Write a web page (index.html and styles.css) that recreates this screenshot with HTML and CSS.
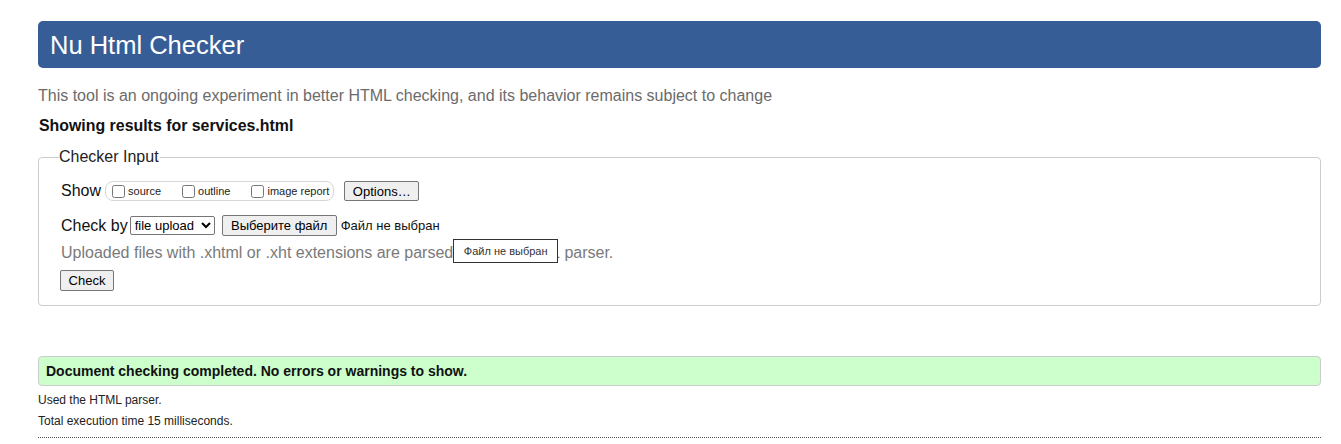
FILE: index.html
```html
<!DOCTYPE html>
<html lang="en">
<head>
<meta charset="utf-8">
<title>Showing results for services.html - Nu Html Checker</title>
<link rel="stylesheet" href="styles.css">
</head>
<body>
<h1 class="title">Nu Html Checker</h1>
<p class="subtitle">This tool is an ongoing experiment in better HTML checking, and its behavior remains subject to change</p>
<p class="showing">Showing results for services.html</p>
<fieldset class="input">
  <legend class="legend">Checker Input</legend>
  <div class="row show-row">
    <span class="label">Show</span>
    <span class="opts">
      <label class="opt"><input type="checkbox" class="cb">source</label>
      <label class="opt"><input type="checkbox" class="cb">outline</label>
      <label class="opt"><input type="checkbox" class="cb"><span class="imgrep">image report</span></label>
    </span>
    <button class="btn btn-opts" type="button">Options…</button>
  </div>
  <div class="row check-row">
    <span class="label">Check by</span>
    <select class="sel"><option>file upload</option></select>
    <span class="file">
      <button class="btn btn-file" type="button">Выберите файл</button>
      <span class="nofile">Файл не выбран</span>
    </span>
  </div>
  <p class="note">Uploaded files with .xhtml or .xht extensions are parsed<span class="tipwrap">&nbsp;using the XML<span class="tip">Файл не выбран</span></span> parser.</p>
  <div class="row">
    <button class="btn btn-check" type="button">Check</button>
  </div>
</fieldset>
<p class="success">Document checking completed. No errors or warnings to show.</p>
<p class="meta">Used the HTML parser.</p>
<p class="meta">Total execution time 15 milliseconds.</p>
<hr class="rule">
</body>
</html>
```
FILE: styles.css
```css
html, body {
  margin: 0;
  background: #fff;
}
body {
  padding: 21px 20px 0 38px;
  font-family: "Liberation Sans", Arial, sans-serif;
  color: #000;
}
.title {
  margin: 0;
  height: 47px;
  box-sizing: border-box;
  padding: 0 12px;
  background: #365d95;
  color: #fff;
  border-radius: 5px;
  font-size: 25.5px;
  font-weight: normal;
  line-height: 48px;
}
.subtitle {
  margin: 18px 0 0 0;
  font-size: 16px;
  line-height: 20px;
  color: #6b6b6b;
}
.showing {
  margin: 10px 0 0 1px;
  font-size: 15.9px;
  font-weight: bold;
  line-height: 20px;
  color: #111;
}
.input {
  margin: 12px 0 0 0;
  padding: 15px 22px 14px 22px;
  border: 1px solid #ccc;
  border-radius: 4px;
  min-width: 0;
}
.legend {
  margin-left: -2px;
  padding: 0 1px 0 0;
  font-size: 16px;
  color: #222;
}
.row {
  display: flex;
  align-items: center;
}
.label {
  font-size: 16px;
  color: #111;
}
.show-row {
  height: 20px;
}
.opts {
  display: inline-flex;
  align-items: center;
  margin-left: 4px;
  height: 18px;
  padding: 0 4px 0 6px;
  border: 1px solid #d6d6d6;
  border-radius: 8px;
  gap: 21px;
}
.opt {
  display: inline-flex;
  align-items: center;
  font-size: 11px;
  color: #222;
}
.imgrep {
  color: #222;
}
.cb {
  margin: 0 3px 0 0;
  width: 13px;
  height: 13px;
}
.btn {
  font-family: "Liberation Sans", Arial, sans-serif;
  font-size: 13px;
  color: #000;
  background: #efefef;
  border: 1px solid #767676;
  border-radius: 2px;
  padding: 1px 6px;
  height: 21px;
  line-height: 17px;
}
.btn-opts {
  margin-left: 10px;
  height: 20px;
  width: 75px;
}
.check-row {
  margin-top: 14px;
  height: 21px;
}
.sel {
  margin-left: 2px;
  font-family: "Liberation Sans", Arial, sans-serif;
  font-size: 13px;
  height: 19px;
  width: 85px;
  border: 1px solid #767676;
  border-radius: 2px;
  padding: 0;
  background: #fff;
  color: #000;
}
.file {
  display: inline-flex;
  align-items: center;
  margin-left: 7px;
}
.btn-file {
  width: 115px;
}
.nofile {
  margin-left: 4px;
  font-size: 13px;
  color: #111;
}
.note {
  margin: 7px 0 0 0;
  font-size: 16px;
  line-height: 20px;
  color: #7a7a7a;
}
.tipwrap {
  position: relative;
}
.tip {
  position: absolute;
  left: 0;
  top: -5px;
  width: 105px;
  height: 24px;
  box-sizing: border-box;
  border: 1px solid #333;
  background: #fff;
  color: #333;
  font-size: 11px;
  line-height: 22px;
  text-align: center;
  white-space: nowrap;
}
.btn-check {
  margin-top: 7px;
  margin-left: -1px;
  width: 54px;
  height: 21px;
}
.success {
  margin: 50px 0 7px 0;
  height: 30px;
  box-sizing: border-box;
  padding: 0 7px;
  background: #ccffcc;
  border: 1px solid #ccc;
  border-radius: 4px;
  font-size: 14px;
  font-weight: bold;
  line-height: 28px;
  color: #111;
}
.meta {
  margin: 6px 0 0 0;
  font-size: 12px;
  line-height: 15px;
  color: #222;
}
.rule {
  margin: 8px 0 0 0;
  border: 0;
  border-top: 1px dotted #555;
  height: 0;
}
```
